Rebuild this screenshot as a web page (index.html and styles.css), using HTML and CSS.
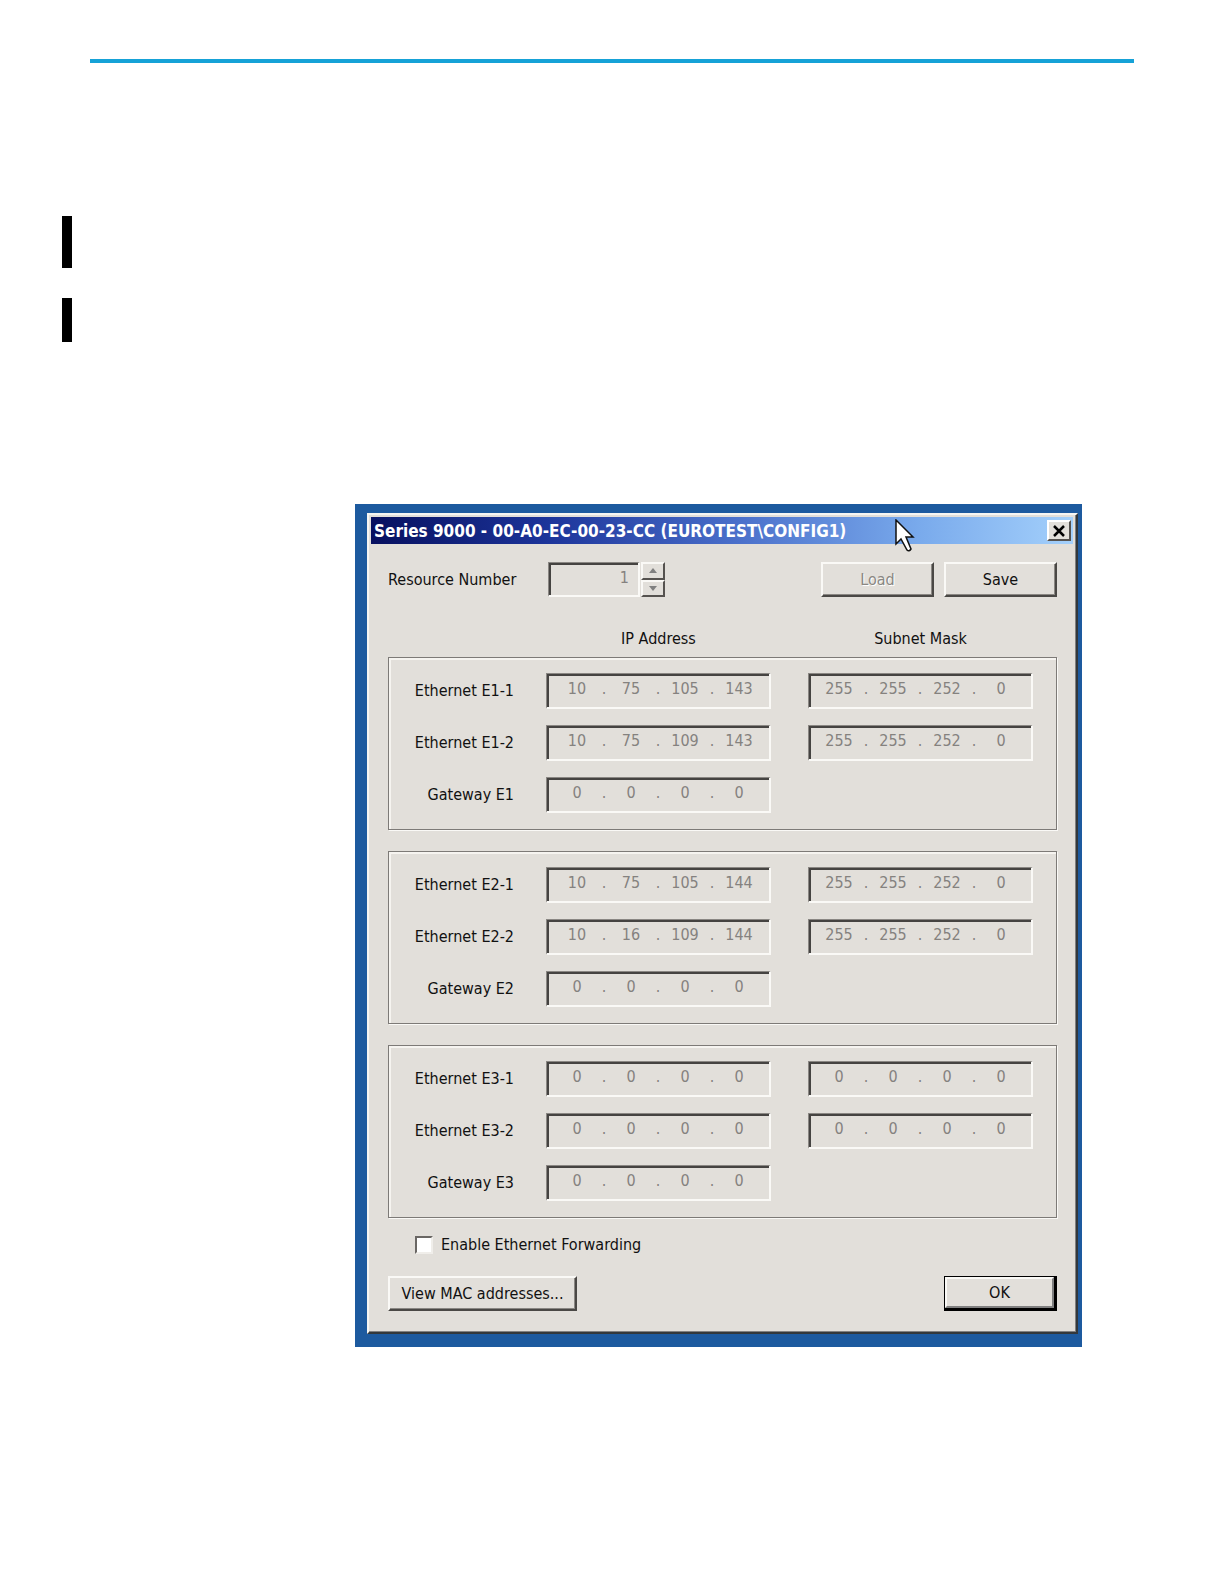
FILE: index.html
```html
<!DOCTYPE html>
<html lang="en">
  <head>
    <meta charset="UTF-8" />
    <meta name="viewport" content="width=device-width, initial-scale=1.0" />
    <title>Series 9000 - IP Configuration</title>
    <link rel="stylesheet" href="styles.css">
  </head>
  <body>
    <div class="page">
      <hr class="page-rule" />
      <div class="change-bar"></div>
      <div class="change-bar short"></div>

      <div class="desktop">
        <form class="window">
          <div class="title-bar">
            <span class="title">Series 9000 - 00-A0-EC-00-23-CC (EUROTEST\CONFIG1)</span>
            <button type="button" class="close-btn" aria-label="Close">
              <svg width="14" height="12" viewBox="0 0 14 12">
                <path d="M2 1L12 11M12 1L2 11" stroke="#000" stroke-width="2.5" />
              </svg>
            </button>
            <svg class="cursor" width="20" height="34" viewBox="0 0 20 34">
              <path d="M1 1V25L6 20L12 31Q14 33 16 30L11 18H18Z" fill="#fff" stroke="#111" stroke-width="1.5" />
            </svg>
          </div>

          <div class="content">
            <div class="toolbar">
              <label for="resource">Resource Number</label>
              <div class="spinner">
                <input type="text" id="resource" class="sunken" value="1" disabled />
                <div class="spin-buttons">
                  <button type="button" aria-label="Increase" disabled>
                    <svg width="8" height="5" viewBox="0 0 8 5"><path d="M0 5L4 0L8 5Z" fill="#808080" /></svg>
                  </button>
                  <button type="button" aria-label="Decrease" disabled>
                    <svg width="8" height="5" viewBox="0 0 8 5"><path d="M0 0L4 5L8 0Z" fill="#808080" /></svg>
                  </button>
                </div>
              </div>
              <div class="toolbar-actions">
                <button type="button" class="btn" disabled>Load</button>
                <button type="button" class="btn">Save</button>
              </div>
            </div>

            <div class="columns headings">
              <span></span>
              <span>IP Address</span>
              <span>Subnet Mask</span>
            </div>

            <div id="groups" class="groups"></div>

            <div class="forwarding">
              <input type="checkbox" id="forwarding" />
              <label for="forwarding">Enable Ethernet Forwarding</label>
            </div>

            <div class="footer">
              <button type="button" class="btn wide">View MAC addresses...</button>
              <button type="submit" class="btn default"><span>OK</span></button>
            </div>
          </div>
        </form>
      </div>
    </div>

    <script src="script.js"></script>
  </body>
</html>
```
FILE: styles.css
```css
* {
  box-sizing: border-box;
}

body {
  margin: 0;
  background: #fff;
  font-family: "DejaVu Sans Condensed", "DejaVu Sans", sans-serif;
  font-size: 16px;
  line-height: 20px;
  color: #111;
}

input,
button {
  font: inherit;
  color: inherit;
}

.page {
  padding: 59px 90px 80px 62px;
}

.page-rule {
  height: 4px;
  margin: 0 0 153px 28px;
  border: none;
  background: #16a2d7;
}

.change-bar {
  width: 10px;
  height: 52px;
  margin-bottom: 30px;
  background: #000;
}

.change-bar.short {
  height: 44px;
  margin-bottom: 162px;
}

.desktop {
  margin: 0 52px 0 293px;
  padding: 9px 4px 13px 12px;
  background: #1d5a9f;
}

.window {
  padding: 2px 3px 21px 2px;
  background: #e2dfda;
  border: 2px solid;
  border-color: #f6f5f2 #33383c #33383c #f6f5f2;
  box-shadow: inset -1px -1px #808080;
}

/* title bar */
.title-bar {
  position: relative;
  display: flex;
  align-items: center;
  justify-content: space-between;
  height: 27px;
  padding: 0 2px 0 3px;
  background: linear-gradient(to right, #07105f, #1c349a 25%, #4a6fca 52%, #79aaec 78%, #a4d0fb);
}

.title {
  color: #fff;
  font-size: 17px;
  font-weight: bold;
  white-space: nowrap;
}

.close-btn {
  display: flex;
  align-items: center;
  justify-content: center;
  width: 24px;
  height: 21px;
  padding: 0;
  background: #e2dfda;
  border: 2px solid;
  border-color: #fff #55524f #55524f #fff;
}

.cursor {
  position: absolute;
  top: 2px;
  right: 158px;
}

/* controls */
.sunken {
  background: #e2dfda;
  border: 2px solid;
  border-width: 1px 2px 2px 1px;
  border-color: #8a8783 #faf9f6 #faf9f6 #8a8783;
  box-shadow: inset 2px 2px #454341;
}

.btn {
  width: 113px;
  height: 35px;
  padding: 0;
  background: #e2dfda;
  border: 2px solid;
  border-color: #faf9f6 #4a4845 #4a4845 #faf9f6;
  box-shadow: inset -1px -1px #8a8783;
}

.btn:disabled {
  color: #8a8783;
  text-shadow: 1px 1px #fff;
}

.btn.wide {
  width: 189px;
}

.btn.default {
  border-color: #000;
  border-width: 1px 3px 3px 1px;
  box-shadow: none;
}

.btn.default span {
  display: block;
  height: 100%;
  padding-top: 4px;
  border: 2px solid;
  border-color: #faf9f6 #808080 #808080 #faf9f6;
}

.content {
  padding: 18px 16px 0 17px;
}

.toolbar {
  display: flex;
  align-items: center;
}

.toolbar > label {
  width: 160px;
}

.spinner {
  display: flex;
  gap: 1px;
  height: 35px;
}

.spinner input {
  width: 92px;
  padding: 0 9px 2px;
  text-align: right;
  color: #85827f;
}

.spin-buttons {
  display: flex;
  flex-direction: column;
}

.spin-buttons button {
  display: flex;
  flex: 1;
  align-items: center;
  justify-content: center;
  width: 24px;
  padding: 0;
  background: #e2dfda;
  border: 2px solid;
  border-color: #faf9f6 #55524f #55524f #faf9f6;
}

.toolbar-actions {
  display: flex;
  gap: 10px;
  margin-left: auto;
}

/* address rows */
.columns {
  display: grid;
  grid-template-columns: 126px 225px 225px;
  column-gap: 32px;
  align-items: center;
}

.columns > :nth-child(3) {
  margin: 0 -5px 0 5px;
}

.headings {
  margin: 32px 0 8px;
  text-align: center;
}

.groups {
  display: flex;
  flex-direction: column;
  gap: 21px;
}

.group {
  display: flex;
  flex-direction: column;
  gap: 16px;
  padding: 15px 0 16px;
  border: 1px solid #7d7a77;
  box-shadow: 1px 1px #faf9f6, inset 2px 2px #f6f4f0;
}

.group .columns {
  margin-left: -1px;
}

.row-label {
  text-align: right;
}

.ip-field {
  display: flex;
  height: 36px;
  padding: 2px 0 0 11px;
  color: #85827f;
}

.ip-field input {
  width: 38px;
  padding: 0 0 5px;
  border: none;
  background: none;
  text-align: center;
  color: inherit;
}

.dot {
  width: 16px;
  padding-top: 3px;
  text-align: center;
}

.forwarding {
  display: flex;
  align-items: center;
  gap: 8px;
  margin: 17px 27px 21px;
}

.forwarding input {
  appearance: none;
  width: 18px;
  height: 18px;
  margin: 0;
  background: #fff;
  border: 2px solid;
  border-color: #6a6764 #f0eeea #f0eeea #6a6764;
}

.forwarding input:checked {
  background: #333;
}

.footer {
  display: flex;
  justify-content: space-between;
}
```
FILE: script.js
```js
const groups = [
  [
    { label: "Ethernet E1-1", ip: "10.75.105.143", mask: "255.255.252.0" },
    { label: "Ethernet E1-2", ip: "10.75.109.143", mask: "255.255.252.0" },
    { label: "Gateway E1", ip: "0.0.0.0" },
  ],
  [
    { label: "Ethernet E2-1", ip: "10.75.105.144", mask: "255.255.252.0" },
    { label: "Ethernet E2-2", ip: "10.16.109.144", mask: "255.255.252.0" },
    { label: "Gateway E2", ip: "0.0.0.0" },
  ],
  [
    { label: "Ethernet E3-1", ip: "0.0.0.0", mask: "0.0.0.0" },
    { label: "Ethernet E3-2", ip: "0.0.0.0", mask: "0.0.0.0" },
    { label: "Gateway E3", ip: "0.0.0.0" },
  ],
];

function renderField(id, name, address) {
  const octets = address.split(".").map((value, i) =>
    `<input type="text" id="${id}-${i}" value="${value}" maxlength="3" aria-label="${name} octet ${i + 1}" disabled />`
  );
  return `<div class="ip-field sunken">${octets.join('<span class="dot">.</span>')}</div>`;
}

function renderGroups() {
  const groupsEl = document.getElementById("groups");
  groups.forEach((rows, g) => {
    const groupEl = document.createElement("div");
    groupEl.className = "group";
    groupEl.innerHTML = rows.map((row, r) => `
      <div class="columns">
        <label class="row-label" for="ip-${g}-${r}-0">${row.label}</label>
        ${renderField(`ip-${g}-${r}`, `${row.label} IP address`, row.ip)}
        ${row.mask ? renderField(`mask-${g}-${r}`, `${row.label} subnet mask`, row.mask) : ""}
      </div>
    `).join("");
    groupsEl.appendChild(groupEl);
  });
}

renderGroups();
```
